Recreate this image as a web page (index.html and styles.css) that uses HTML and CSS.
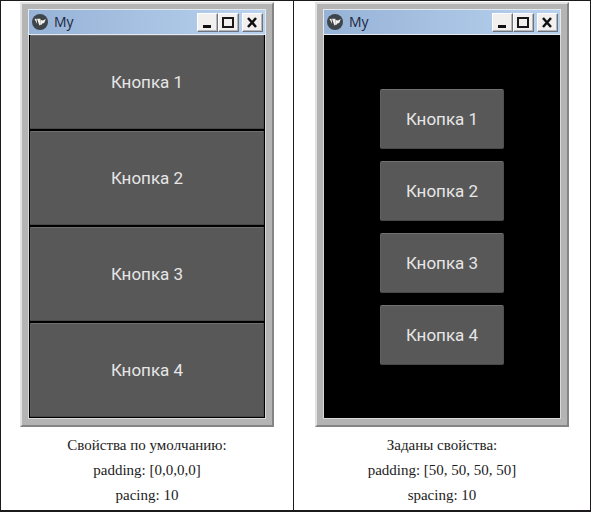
FILE: index.html
```
<!DOCTYPE html>
<html lang="ru">
<head>
<meta charset="utf-8">
<meta name="viewport" content="width=device-width, initial-scale=1">
<title>BoxLayout: padding и spacing</title>
<link rel="stylesheet" href="styles.css">
</head>
<body>
<svg class="symbols" aria-hidden="true">
  <symbol id="logo" viewBox="0 0 16 16">
    <circle cx="8" cy="8" r="8" fill="#3d454b"/>
    <path d="M2.500 5 4.500 4.800 5.200 10zM5 4.800h3.400l.4 5.600-1.400 1.200zM8.800 6 11 6.400l2.800-1.400-1.600 4-1.900.6L8.900 11.500z" fill="#f4f1ec"/>
  </symbol>
  <symbol id="min" viewBox="0 0 18 16"><path d="M5 12.500h8" stroke="#111" stroke-width="3"/></symbol>
  <symbol id="max" viewBox="0 0 18 16"><path d="M4 4v9h10V4M3 4h12" fill="none" stroke="#181818" stroke-width="2"/></symbol>
  <symbol id="close" viewBox="0 0 18 16"><path d="m5 4 8 9M13 4l-8 9" stroke="#111" stroke-width="2.500"/></symbol>
</svg>
<main class="comparison">
  <figure class="example">
    <section class="window">
      <header class="titlebar">
        <svg class="logo" aria-hidden="true"><use href="#logo"/></svg>
        <span class="title">My</span>
        <button class="control" aria-label="Свернуть"><svg><use href="#min"/></svg></button>
        <button class="control" aria-label="Развернуть"><svg><use href="#max"/></svg></button>
        <button class="control close" aria-label="Закрыть"><svg><use href="#close"/></svg></button>
      </header>
      <div class="box">
        <button class="key">Кнопка 1</button>
        <button class="key">Кнопка 2</button>
        <button class="key">Кнопка 3</button>
        <button class="key">Кнопка 4</button>
      </div>
    </section>
    <figcaption>
      <p>Свойства по умолчанию:</p>
      <p>padding: [0,0,0,0]</p>
      <p>pacing: 10</p>
    </figcaption>
  </figure>
  <figure class="example">
    <section class="window">
      <header class="titlebar">
        <svg class="logo" aria-hidden="true"><use href="#logo"/></svg>
        <span class="title">My</span>
        <button class="control" aria-label="Свернуть"><svg><use href="#min"/></svg></button>
        <button class="control" aria-label="Развернуть"><svg><use href="#max"/></svg></button>
        <button class="control close" aria-label="Закрыть"><svg><use href="#close"/></svg></button>
      </header>
      <div class="box spaced">
        <button class="key">Кнопка 1</button>
        <button class="key">Кнопка 2</button>
        <button class="key">Кнопка 3</button>
        <button class="key">Кнопка 4</button>
      </div>
    </section>
    <figcaption>
      <p>Заданы свойства:</p>
      <p>padding: [50, 50, 50, 50]</p>
      <p>spacing: 10</p>
    </figcaption>
  </figure>
</main>
</body>
</html>
```
FILE: styles.css
```
* {
  box-sizing: border-box;
}

body {
  margin: 0;
  background: #fff;
  color: #1c1c1c;
  font-family: "Liberation Serif", serif;
}

.symbols {
  display: none;
}

.comparison {
  display: grid;
  grid-template-columns: 293fr 296fr;
  border: 1px solid #1c1a1c;
  border-bottom-width: 2px;
}

.example {
  margin: 0;
  padding: 1px 19px 2px;
}

.example:first-child {
  border-right: 1px solid #1c1a1c;
}

.window {
  max-width: 254px;
  margin: 0 auto;
  padding: 5px 6px 6px;
  background: #b4b4b4;
  border: 2px solid;
  border-color: #e2e2e2 #858585 #858585 #e2e2e2;
}

.titlebar {
  display: flex;
  align-items: center;
  height: 26px;
  padding: 0 2px 0 3px;
  background: linear-gradient(90deg, #96b2d6, #b8d2ee);
  border: 1px solid #e4eaf0;
}

.logo {
  width: 16px;
  height: 16px;
}

.title {
  flex: 1;
  margin-left: 6px;
  color: #1c2740;
  font: 14px/20px "Open Sans", sans-serif;
}

.control {
  width: 21px;
  height: 19px;
  padding: 0;
  background: #f2f0ee;
  border: 1px solid;
  border-color: #fff #6c7480 #6c7480 #fff;
  box-shadow: inset -1px -1px #b4b6ba;
}

.control svg {
  display: block;
  width: 18px;
  height: 16px;
}

.close {
  margin-left: 3px;
}

.box {
  display: grid;
  grid-auto-rows: 94px;
  gap: 2px;
  padding: 0 1px 1px;
  background: #000;
  border: 1px solid #d8d8d8;
  border-top: 0;
}

.spaced {
  grid-auto-rows: 60px;
  gap: 12px;
  padding: 54px 56px 53px;
}

.key {
  padding: 0;
  background: #585858;
  color: #e6e6e6;
  border: 1px solid;
  border-color: #707070 #505050 #484848 #606060;
  border-radius: 1px;
  font: 17px/24px Roboto, sans-serif;
}

.spaced .key {
  border-radius: 2px;
}

figcaption {
  padding-top: 6px;
  text-align: center;
  font-size: 15px;
  line-height: 25px;
}

figcaption p {
  margin: 0;
}
```
